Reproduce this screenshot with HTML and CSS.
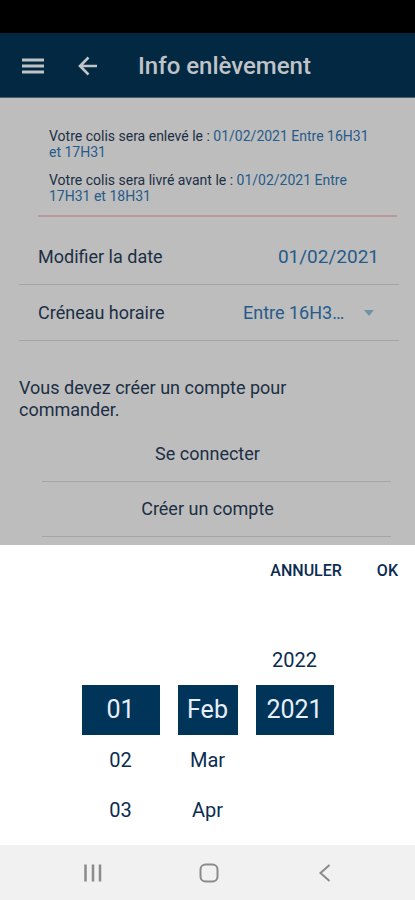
FILE: index.html
```html
<!DOCTYPE html>
<html lang="fr">
<head>
    <meta charset="UTF-8">
    <meta name="viewport" content="width=device-width, initial-scale=1">
    <title>Info enlèvement</title>
    <link rel="stylesheet" href="styles.css">
</head>
<body>
    <div class="status-bar"></div>
    <header class="header">
        <button type="button" class="icon-btn" aria-label="Menu">
            <svg width="22" height="22" viewBox="0 0 22 22"><path d="M0 5h22M0 11h22M0 17h22" fill="none" stroke="currentColor" stroke-width="2.800"/></svg>
        </button>
        <button type="button" class="icon-btn back" aria-label="Retour">
            <svg width="20" height="20" viewBox="0 0 20 20"><path d="M19 10H2.500M10.500 1.500L2 10l8.500 8.500" fill="none" stroke="currentColor" stroke-width="2.600"/></svg>
        </button>
        <h1>Info enlèvement</h1>
    </header>

    <main class="page">
        <div class="summary">
            <p>Votre colis sera enlevé le : <span>01/02/2021 Entre 16H31 et 17H31</span></p>
            <p>Votre colis sera livré avant le : <span>01/02/2021 Entre 17H31 et 18H31</span></p>
        </div>
        <form class="fields">
            <div class="row">
                <label for="date">Modifier la date</label>
                <input type="text" id="date" class="date" value="01/02/2021" readonly>
            </div>
            <div class="row">
                <label for="slot">Créneau horaire</label>
                <div class="select">
                    <select id="slot">
                        <option>Entre 16H31 et 17H31</option>
                    </select>
                    <svg width="10" height="6" viewBox="0 0 10 6"><path d="M0 0h10L5 6z" fill="currentColor"/></svg>
                </div>
            </div>
        </form>
        <p class="notice">Vous devez créer un compte pour commander.</p>
        <nav class="account">
            <a href="#">Se connecter</a>
            <a href="#">Créer un compte</a>
        </nav>
    </main>

    <!-- sélecteur de date -->
    <section class="sheet">
        <div class="actions">
            <button type="button">ANNULER</button>
            <button type="button">OK</button>
        </div>
        <div class="picker">
            <div class="col first">
                <button type="button" class="active">01</button>
                <button type="button">02</button>
                <button type="button">03</button>
            </div>
            <div class="col month first">
                <button type="button" class="active">Feb</button>
                <button type="button">Mar</button>
                <button type="button">Apr</button>
            </div>
            <div class="col">
                <button type="button">2022</button>
                <button type="button" class="active">2021</button>
            </div>
        </div>
    </section>

    <footer class="nav-bar">
        <button type="button" aria-label="Applications récentes">
            <svg width="20" height="20" viewBox="0 0 20 20"><path d="M2.500 1.500v17M10 1.500v17M17 1.500v17" fill="none" stroke="currentColor" stroke-width="2.500"/></svg>
        </button>
        <button type="button" aria-label="Accueil">
            <svg width="20" height="20" viewBox="0 0 20 20"><rect x="1.500" y="1.500" width="17" height="17" rx="5" fill="none" stroke="currentColor" stroke-width="2"/></svg>
        </button>
        <button type="button" aria-label="Précédent">
            <svg width="20" height="20" viewBox="0 0 20 20"><path d="M14.500 2L5.500 10l9 8" fill="none" stroke="currentColor" stroke-width="2"/></svg>
        </button>
    </footer>
</body>
</html>
```

FILE: styles.css
```css
* {
    margin: 0;
    padding: 0;
    box-sizing: border-box;
}
body {
    display: flex;
    flex-direction: column;
    min-height: 100vh;
    font-family: Roboto, "Liberation Sans", sans-serif;
    font-size: 18px;
    line-height: 22px;
    color: #1c2f45;
    background-color: #fff;
}
button, input, select {
    font: inherit;
    color: inherit;
    border: 0;
    background: none;
}
button {
    cursor: pointer;
}
svg {
    display: block;
}
.status-bar {
    height: 33px;
    background-color: #000;
}
.header {
    display: flex;
    align-items: center;
    height: 65px;
    padding: 2px 22px 0;
    color: #c0c3c8;
    background-color: #022842;
    border-bottom: 1px solid #4d5a6c;
}
.header .back {
    margin-left: 34px;
}
.header h1 {
    margin-left: 40px;
    font-size: 24px;
    line-height: 28px;
    font-weight: 500;
}

.page {
    flex: 1;
    padding: 30px 16px 8px 19px;
    background-color: #bdbdbd;
}
.summary {
    margin: 0 2px 0 19px;
    padding: 0 28px 11px 11px;
    font-size: 14px;
    line-height: 16px;
    border-bottom: 2px solid #b9989e;
}
.summary p + p {
    margin-top: 12px;
}
.summary span {
    color: #265b8b;
}
.row {
    display: flex;
    align-items: center;
    justify-content: space-between;
    height: 56px;
    padding: 0 20px 0 19px;
    border-bottom: 1px solid #a5a5a5;
}
.row:first-child {
    height: 68px;
    padding-top: 12px;
}
.date {
    width: 120px;
    font-size: 19px;
    text-align: right;
    color: #265b8b;
}
.select {
    display: flex;
    align-items: center;
    gap: 16px;
    padding-right: 5px;
    color: #6f92ab;
}
.select select {
    width: 105px;
    appearance: none;
    overflow: hidden;
    text-overflow: ellipsis;
    white-space: nowrap;
    color: #265b8b;
}
.notice {
    max-width: 320px;
    margin: 36px 0 6px;
}
.account {
    padding: 0 8px 0 23px;
}
.account a {
    display: block;
    padding: 16px 18px 16px 0;
    text-align: center;
    color: inherit;
    text-decoration: none;
    border-bottom: 1px solid #a5a5a5;
}

.sheet {
    padding-bottom: 10px;
    color: #0b2c50;
}
.actions {
    display: flex;
    justify-content: flex-end;
    gap: 35px;
    padding: 15px 17px 3px;
    font-size: 16px;
    font-weight: 500;
}
.picker {
    display: flex;
    justify-content: center;
    gap: 18px;
    height: 250px;
}
.col {
    display: flex;
    flex-direction: column;
    width: 78px;
    padding-top: 50px;
}
.month {
    width: 60px;
}
.first {
    padding-top: 100px;
}
.col button {
    height: 50px;
    font-size: 20px;
}
.col .active {
    font-size: 25px;
    color: #e9eef8;
    background-color: #003459;
}

.nav-bar {
    display: flex;
    align-items: center;
    justify-content: space-around;
    height: 55px;
    padding: 0 32px 0 35px;
    color: #8b8b8b;
    background-color: #f1f1f1;
}
```
